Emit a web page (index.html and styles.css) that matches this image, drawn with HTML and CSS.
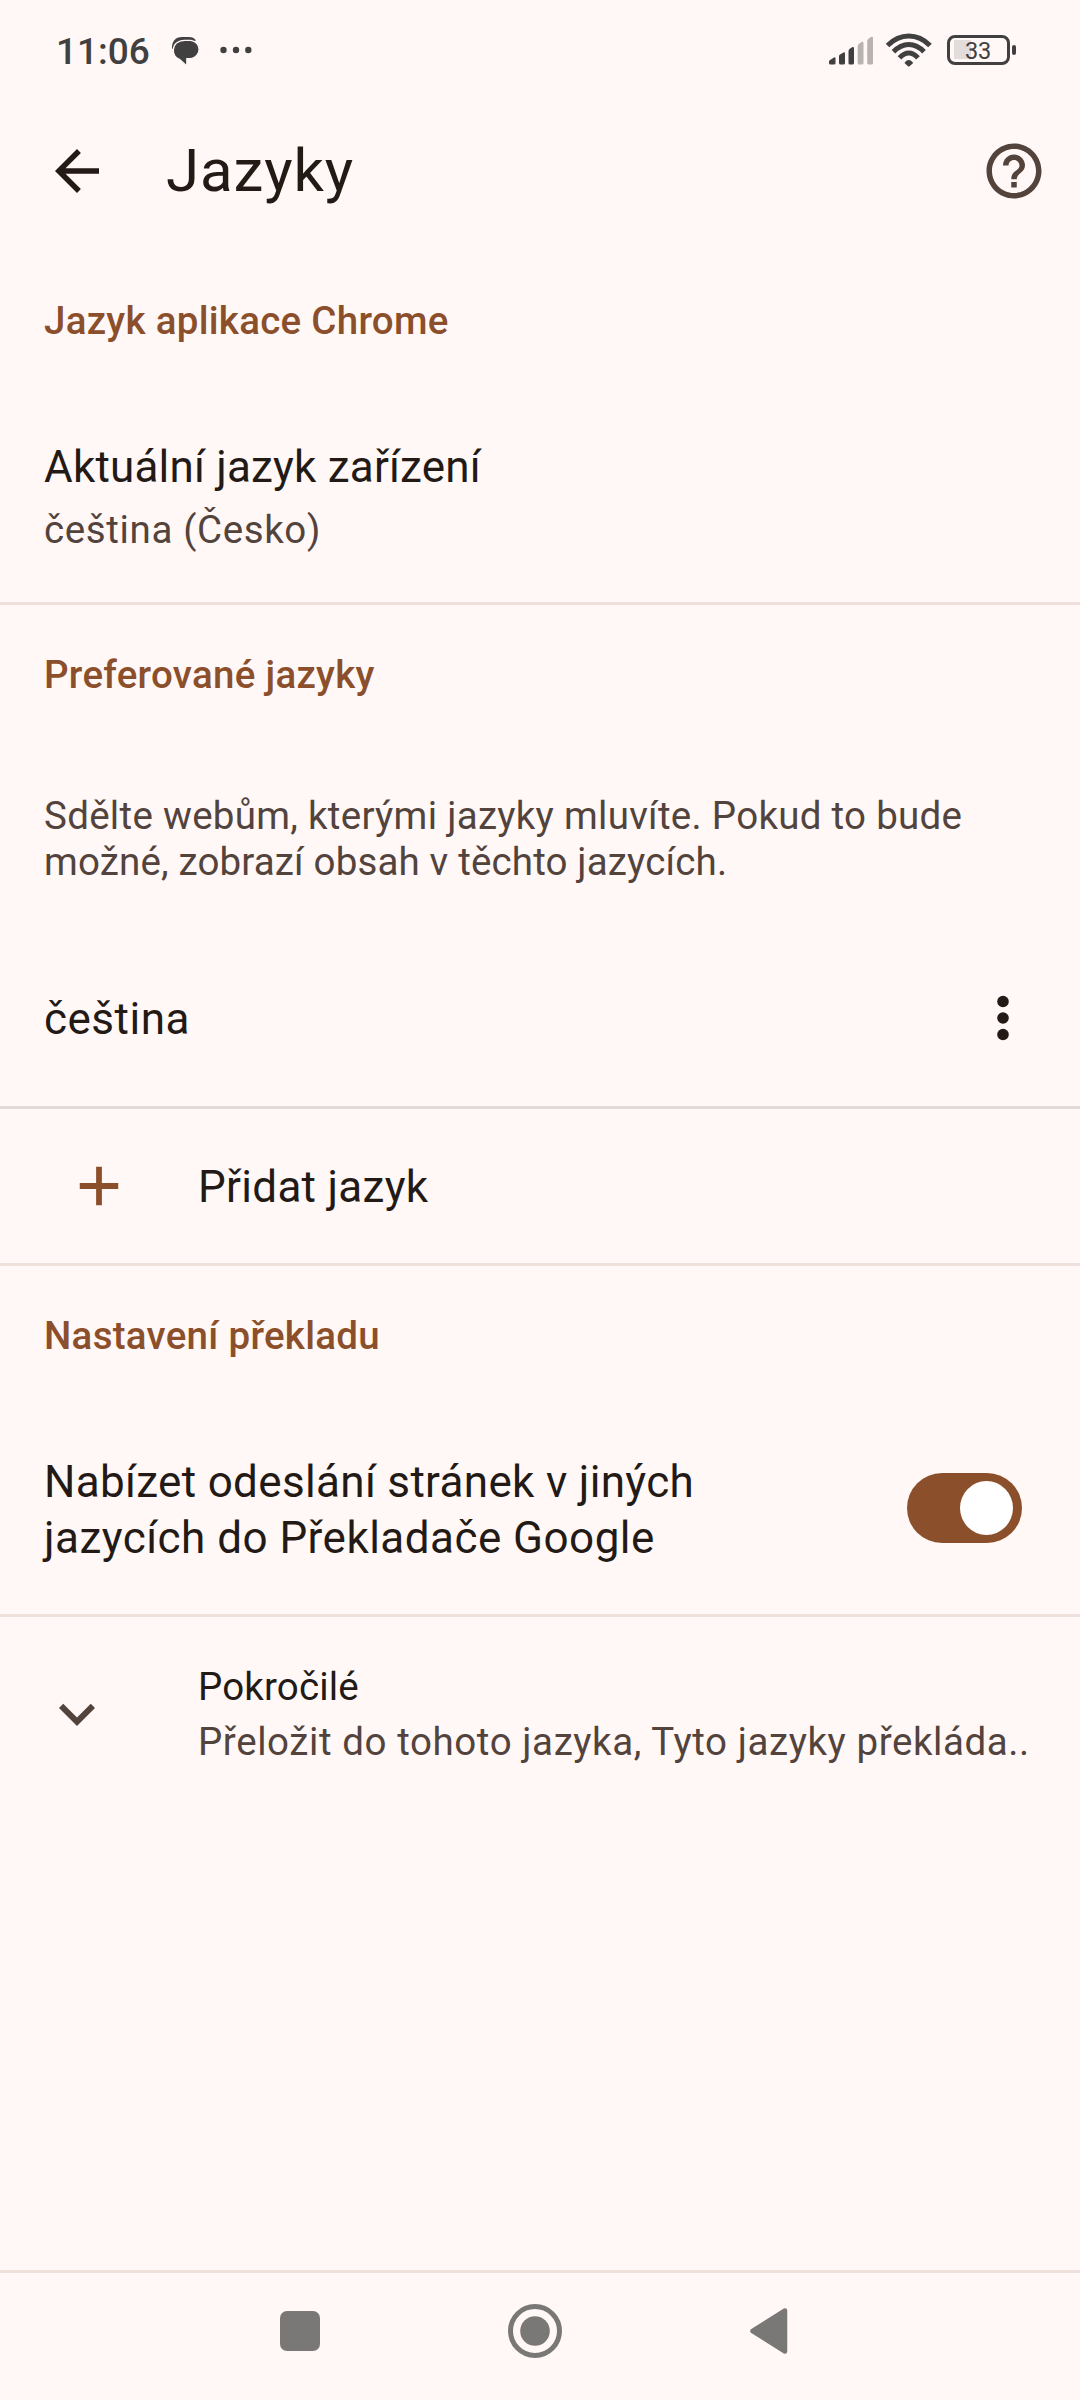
FILE: index.html
```html
<!DOCTYPE html>
<html lang="cs">
<head>
<meta charset="utf-8">
<title>Jazyky</title>
<link rel="stylesheet" href="styles.css">
</head>
<body>
<div class="screen">
  <div class="status">
    <span class="clock">11:06</span>
    <svg class="notifications" width="84" height="100" viewBox="170 0 84 100">
      <path fill="#414040" d="M172 49C171.300 41.500 175.500 37 182 37h7c3 0 5.500 1 7 3.500z"/>
      <path fill="#414040" stroke="#fff8f6" stroke-width="1.200" d="M184.500 40.300h6.300a9.700 9.200 0 0 1 0 18.200h-4V66l-7-6.500C176 58 173.300 54.500 173.300 49.900 173.300 44.500 178 40.300 184.500 40.300z"/>
      <g fill="#414040"><circle cx="223.500" cy="50" r="3.200"/><circle cx="236" cy="50" r="3.200"/><circle cx="248.300" cy="50" r="3.200"/></g>
    </svg>
    <svg class="signal" width="46" height="100" viewBox="828 0 46 100">
      <path fill="#414040" d="M829 61.500q0-1 1-1.500l4-2.500q1.500-.6 1.500 1V63q0 1.500-1.500 1.500h-3.500q-1.500 0-1.500-1.500zM839 56q0-1 1-1.500l3.500-2q1.500-.6 1.500 1V63q0 1.500-1.500 1.500h-3q-1.500 0-1.500-1.500zM848.500 51q0-1.200 1-2l2.500-1.800q2-.8 2 1V63q0 1.500-1.500 1.500H850q-1.500 0-1.500-1.500z"/>
      <path fill="#b8b2b1" d="M857.700 46q0-1.200 1-2l2.800-2q2-.8 2 1v20q0 1.500-1.500 1.500h-2.800q-1.500 0-1.500-1.500zM867.200 41q0-1.200 1-2l2.800-2q2-.8 2 1v25q0 1.500-1.500 1.500h-2.800q-1.500 0-1.500-1.500z"/>
    </svg>
    <svg class="wifi" width="48" height="100" viewBox="885 0 48 100">
      <g fill="none" stroke="#414040" stroke-width="5">
        <path d="M887.500 45.500Q897 36 908.800 36T930 45.500"/>
        <path d="M893.500 51.700Q900.500 44.400 908.800 44.400T924 51.700"/>
        <path d="M899.500 57.900Q904 53 908.800 53T918 57.900"/>
      </g>
      <path fill="#414040" d="M904.700 62.500q4-4.800 8.200 0 .3.600-.2 1l-3.200 2.800q-.8.500-1.500 0l-3-2.800q-.6-.5-.3-1z"/>
    </svg>
    <div class="battery"><span class="level">33</span></div>
  </div>

  <div class="appbar">
    <svg width="66" height="66" viewBox="0 0 24 24"><path fill="#231a16" d="M20 11H7.830l5.590-5.590L12 4l-8 8 8 8 1.410-1.410L7.830 13H20v-2z"/></svg>
    <h1 class="title">Jazyky</h1>
    <svg width="66" height="66" viewBox="0 0 24 24"><path fill="#53433d" d="M11 18h2v-2h-2v2zm1-16C6.480 2 2 6.480 2 12s4.480 10 10 10 10-4.480 10-10S17.520 2 12 2zm0 18c-4.410 0-8-3.590-8-8s3.590-8 8-8 8 3.590 8 8-3.590 8-8 8zm0-14c-2.210 0-4 1.790-4 4h2c0-1.100.9-2 2-2s2 .9 2 2c0 2-3 1.750-3 5h2c0-2.250 3-2.500 3-5 0-2.210-1.790-4-4-4z"/></svg>
  </div>

  <h2 class="section section-first">Jazyk aplikace Chrome</h2>
  <div class="item current">
    <div class="primary">Aktuální jazyk zařízení</div>
    <div class="secondary">čeština (Česko)</div>
  </div>

  <h2 class="section section-preferred">Preferované jazyky</h2>
  <p class="hint"><span>Sdělte webům, kterými jazyky mluvíte. Pokud to bude</span><br><span class="hint-end">možné, zobrazí obsah v těchto jazycích.</span></p>
  <div class="item language">
    <span class="primary primary-wide">čeština</span>
    <svg width="12" height="46" viewBox="0 0 12 46"><g fill="#231a16"><circle cx="6" cy="6.500" r="5.800"/><circle cx="6" cy="23" r="5.800"/><circle cx="6" cy="39.500" r="5.800"/></g></svg>
  </div>
  <div class="item add">
    <svg width="66" height="66" viewBox="0 0 24 24"><path fill="#8c4f2b" d="M19 13.050h-5.950V19h-2.100v-5.950H5v-2.100h5.950V5h2.100v5.950H19z"/></svg>
    <span class="primary">Přidat jazyk</span>
  </div>

  <h2 class="section section-translate">Nastavení překladu</h2>
  <div class="item offer">
    <div class="primary offer-text">Nabízet odeslání stránek v jiných<br><span class="offer-end">jazycích do Překladače Google</span></div>
    <div class="switch"><div class="knob"></div></div>
  </div>
  <div class="item advanced">
    <svg width="72" height="72" viewBox="0 0 24 24"><path fill="#53433d" d="M16.590 8.590L12 13.170 7.410 8.590 6 10l6 6 6-6z"/></svg>
    <div class="advanced-text">
      <div class="advanced-title">Pokročilé</div>
      <div class="advanced-summary">Přeložit do tohoto jazyka, Tyto jazyky překláda..</div>
    </div>
  </div>

  <div class="navbar">
    <svg width="40" height="40" viewBox="0 0 40 40"><rect width="40" height="40" rx="7" fill="#7a7876"/></svg>
    <svg width="54" height="54" viewBox="0 0 54 54"><circle cx="27" cy="27" r="24.500" fill="none" stroke="#7a7876" stroke-width="5"/><circle cx="27" cy="27" r="14.800" fill="#7a7876"/></svg>
    <svg width="38" height="46" viewBox="0 0 38 46"><path d="M35 2.500v41L2.500 23z" fill="#7a7876" stroke="#7a7876" stroke-width="4.500" stroke-linejoin="round"/></svg>
  </div>
</div>
</body>
</html>
```
FILE: styles.css
```css
* { box-sizing: border-box; }
body {
  margin: 0;
  background: #fff8f6;
  color: #231a16;
  font-family: Roboto, "Noto Sans", sans-serif;
}
h1, h2, p { margin: 0; font-weight: 400; }
svg { display: block; flex: none; }
.screen {
  width: 1080px;
  height: 2400px;
  display: flex;
  flex-direction: column;
}
.screen > * { flex: none; white-space: nowrap; }

.status { height: 100px; display: flex; padding: 0 64px 0 56px; }
.clock { width: 114px; font-size: 37px; font-weight: 500; line-height: 103px; color: #414040; }
.signal { margin-left: auto; }
.wifi { margin-left: 11px; }
.battery {
  position: relative;
  width: 63px;
  height: 30px;
  margin: 35px 6px 0 14px;
  border: 3px solid #414040;
  border-radius: 8px;
  padding: 2px 4px;
  background: linear-gradient(#e2dcda, #e2dcda) 4px 2px / 17px 19px no-repeat;
}
.battery::after {
  content: "";
  position: absolute;
  left: 62px;
  top: 7px;
  width: 4px;
  height: 10px;
  border-radius: 2px;
  background: #414040;
}
.level {
  display: block;
  margin-left: 11px;
  font-size: 23.500px;
  line-height: 22px;
  letter-spacing: -0.300px;
  color: #414040;
}

.appbar { height: 142px; display: flex; align-items: center; padding: 0 33px 0 44px; }
.title { flex: 1; padding-left: 56px; font-size: 60px; line-height: 66px; letter-spacing: 0.900px; }

.section {
  padding-left: 44px;
  font-size: 38.500px;
  font-weight: 500;
  color: #8c4f2b;
  letter-spacing: 0.280px;
}
.section-first { height: 156px; line-height: 158px; }
.section-preferred { line-height: 140px; }
.section-translate { line-height: 139px; }

.item { border-bottom: 3px solid #efe0db; padding-left: 44px; }
.primary { font-size: 44px; line-height: 61px; letter-spacing: 0.300px; }
.primary-wide { letter-spacing: 0.500px; }
.secondary { font-size: 38.500px; line-height: 64px; letter-spacing: 0.630px; color: #53433d; }
.current { height: 207px; padding-top: 39px; }
.current .primary { letter-spacing: 0.200px; }

.hint {
  height: 186px;
  padding: 48px 0 0 44px;
  font-size: 38.500px;
  line-height: 46px;
  letter-spacing: 0.290px;
  color: #53433d;
}
.hint-end { letter-spacing: 0.160px; }

.language, .add, .offer, .advanced { display: flex; align-items: center; }
.language { height: 178px; justify-content: space-between; padding-right: 71px; border-color: #e0dad8; }
.language svg { margin-bottom: 2px; }
.language .primary { margin-top: 1px; }
.add { height: 157px; padding-left: 66px; }
.add .primary { margin: 2px 0 0 66px; }
.offer { height: 212px; justify-content: space-between; padding-right: 58px; }
.offer-text { line-height: 56px; letter-spacing: 0.330px; }
.offer-end { letter-spacing: 0.470px; }
.switch {
  width: 115px;
  height: 70px;
  margin-bottom: 3px;
  padding: 8px 9px;
  border-radius: 35px;
  background: #8c4f2b;
  display: flex;
  justify-content: flex-end;
}
.knob { width: 53px; height: 54px; border-radius: 50%; background: #fff; }
.advanced { height: 193px; padding-left: 41px; border-bottom: 0; }
.advanced-text { margin-left: 85px; font-size: 38.500px; line-height: 55px; }
.advanced-title { letter-spacing: 0.150px; }
.advanced-summary { letter-spacing: 0.580px; color: #53433d; }

.navbar {
  height: 130px;
  margin-top: auto;
  padding: 0 292px 11px 280px;
  border-top: 3px solid #efe0db;
  display: flex;
  align-items: center;
  justify-content: space-between;
}
```
